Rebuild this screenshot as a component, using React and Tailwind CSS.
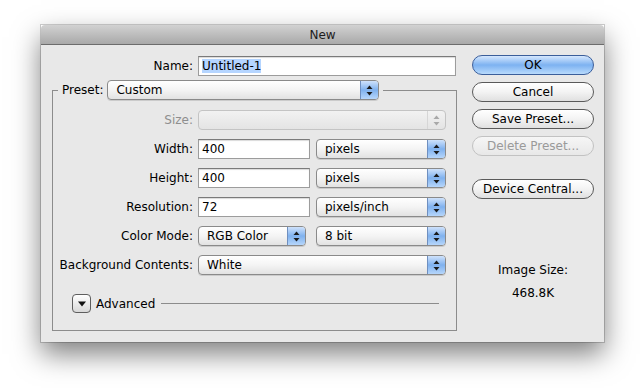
import React from 'react';

const font = { fontFamily: '"DejaVu Sans", "Liberation Sans", sans-serif' };

function Arrows({ disabled }) {
  const c = disabled ? '#a8a8a8' : '#1a1a1a';
  return (
    <svg width="7" height="11" viewBox="0 0 7 11">
      <polygon points="3.5,0.5 6.5,4 0.5,4" fill={c} />
      <polygon points="0.5,7 6.5,7 3.5,10.5" fill={c} />
    </svg>
  );
}

function Popup({ value, className = '', disabled }) {
  return (
    <div
      className={`flex h-[20px] items-stretch rounded-[4px] border ${
        disabled
          ? 'border-[#c4c4c4] bg-gradient-to-b from-[#f2f2f2] to-[#e4e4e4]'
          : 'border-[#8a8a8a] bg-gradient-to-b from-[#ffffff] via-[#f4f4f4] to-[#e2e2e2] shadow-[0_1px_0_rgba(0,0,0,0.12)]'
      } ${className}`}
    >
      <div className="flex-1 pl-[8px] text-[12px] leading-[18px] text-black">{value}</div>
      <div
        className={`flex w-[18px] items-center justify-center rounded-r-[3px] ${
          disabled
            ? 'border-l border-[#d6d6d6]'
            : 'border-l border-[#6f8fbf] bg-gradient-to-b from-[#cfe2fb] via-[#7fb1ee] to-[#b6d6fb]'
        }`}
      >
        <Arrows disabled={disabled} />
      </div>
    </div>
  );
}

function Field({ value, className = '' }) {
  return (
    <div
      className={`h-[20px] border border-[#9c9c9c] border-t-[#7a7a7a] bg-white pl-[3px] text-[12px] leading-[18px] text-black shadow-[inset_0_1px_1px_rgba(0,0,0,0.15)] ${className}`}
    >
      {value}
    </div>
  );
}

function Button({ children, primary, disabled }) {
  return (
    <div
      className={`flex h-[20px] items-center justify-center rounded-full border text-[12px] ${
        primary
          ? 'border-[#3b5e9a] bg-gradient-to-b from-[#d5e7fd] via-[#7db2f1] to-[#b8dafc] text-black'
          : disabled
          ? 'border-[#c2c2c2] bg-gradient-to-b from-[#f6f6f6] to-[#e8e8e8] text-[#9a9a9a]'
          : 'border-[#5a5a5a] bg-gradient-to-b from-[#ffffff] via-[#f3f3f3] to-[#e0e0e0] text-black'
      }`}
    >
      {children}
    </div>
  );
}

function Row({ label, children, dim }) {
  return (
    <div className="flex h-[20px] items-center">
      <div className={`w-[145px] pr-[5px] text-right text-[12px] ${dim ? 'text-[#8e8e8e]' : 'text-black'}`}>
        {label}
      </div>
      {children}
    </div>
  );
}

export default function App() {
  return (
    <div className="h-[388px] w-[640px] bg-white pl-[41px] pt-[25px]" style={font}>
      <div className="flex h-[317px] w-[563px] flex-col shadow-[0_12px_26px_rgba(0,0,0,0.5),0_0_0_1px_rgba(0,0,0,0.18)]">
        <div className="flex h-[20px] items-center justify-center rounded-t-[4px] border-b border-[#6c6c6c] bg-gradient-to-b from-[#d2d2d2] to-[#a9a9a9] text-[12px] text-[#1c1c1c]">
          New
        </div>
        <div className="flex flex-1 bg-[#e8e8e8]">
          <div className="w-[415px] pl-[11px] pt-[11px]">
            <div className="flex h-[20px] items-center">
              <div className="w-[146px] pr-[5px] text-right text-[12px] text-black">Name:</div>
              <Field className="w-[258px]" value={<span className="bg-[#b5d5ff]">Untitled-1</span>} />
            </div>
            <div className="mt-[4px] w-[405px]">
              <div className="flex h-[20px] items-stretch">
                <div className="mt-[10px] w-[6px] border-l border-t border-[#8c8c8c]" />
                <div className="px-[4px] text-[12px] leading-[20px] text-black">Preset:</div>
                <Popup className="w-[272px]" value="Custom" />
                <div className="ml-[4px] mt-[10px] flex-1 border-r border-t border-[#8c8c8c]" />
              </div>
              <div className="flex h-[231px] flex-col gap-[9px] border-b border-l border-r border-[#8c8c8c] pt-[10px]">
                <Row label="Size:" dim>
                  <Popup className="w-[248px]" value="" disabled />
                </Row>
                <Row label="Width:">
                  <Field className="w-[112px]" value="400" />
                  <Popup className="ml-[6px] w-[130px]" value="pixels" />
                </Row>
                <Row label="Height:">
                  <Field className="w-[112px]" value="400" />
                  <Popup className="ml-[6px] w-[130px]" value="pixels" />
                </Row>
                <Row label="Resolution:">
                  <Field className="w-[112px]" value="72" />
                  <Popup className="ml-[6px] w-[130px]" value="pixels/inch" />
                </Row>
                <Row label="Color Mode:">
                  <Popup className="w-[108px]" value="RGB Color" />
                  <Popup className="ml-[10px] w-[130px]" value="8 bit" />
                </Row>
                <Row label="Background Contents:">
                  <Popup className="w-[248px]" value="White" />
                </Row>
                <div className="mt-[10px] flex h-[19px] items-center pl-[19px]">
                  <div className="flex h-[19px] w-[19px] items-center justify-center rounded-[4px] border border-[#5e5e5e] bg-gradient-to-b from-[#ffffff] to-[#d8d8d8]">
                    <svg width="8" height="6" viewBox="0 0 8 6">
                      <polygon points="0,0.5 8,0.5 4,5.5" fill="#111" />
                    </svg>
                  </div>
                  <span className="ml-[5px] text-[12px] text-black">Advanced</span>
                  <div className="ml-[6px] mr-[17px] h-px flex-1 bg-[#8c8c8c]" />
                </div>
              </div>
            </div>
          </div>
          <div className="ml-[16px] flex w-[122px] flex-col pt-[10px]">
            <div className="flex flex-col gap-[7px]">
              <Button primary>OK</Button>
              <Button>Cancel</Button>
              <Button>Save Preset...</Button>
              <Button disabled>Delete Preset...</Button>
            </div>
            <div className="mt-[23px]">
              <Button>Device Central...</Button>
            </div>
            <div className="mt-[60px] text-center text-[12px] leading-[23px] text-black">
              <div>Image Size:</div>
              <div>468.8K</div>
            </div>
          </div>
        </div>
      </div>
    </div>
  );
}
